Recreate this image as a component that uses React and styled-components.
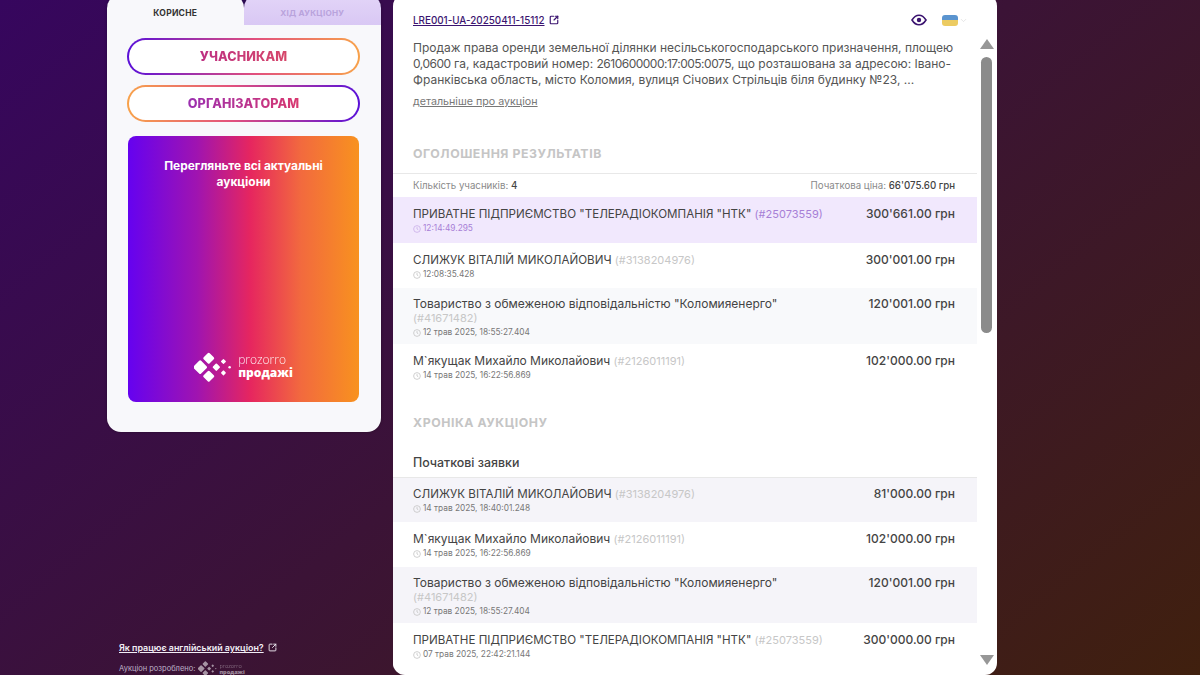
import React from "react";
import styled, { createGlobalStyle } from "styled-components";
import { ChevronDown, SquareArrowOutUpRight } from "lucide-react";

const Global = createGlobalStyle`
  html, body { margin: 0; padding: 0; height: 100%; }
  body { font-family: Inter, "Noto Sans", sans-serif; overflow: hidden; }
  * { box-sizing: border-box; }
`;

const Page = styled.div`
  width: 1200px;
  height: 675px;
  overflow: hidden;
  display: flex;
  gap: 12px;
  padding-left: 107px;
  background: linear-gradient(141deg, #36065e 0%, #40200e 100%);
`;

const Side = styled.aside`
  width: 274px;
  height: 675px;
  display: flex;
  flex-direction: column;
`;

const Card = styled.div`
  margin-top: -6px;
  height: 438px;
  background: #f8f8fb;
  border-radius: 14px;
  display: flex;
  flex-direction: column;
  overflow: hidden;
  box-shadow: 0 0 3px rgba(0, 0, 0, 0.3);
`;

const Tabs = styled.div`
  display: flex;
  height: 31px;
  flex-shrink: 0;
  background: #2d0c52;
`;

const Tab = styled.div`
  height: 31px;
  padding-top: 6px;
  display: flex;
  align-items: center;
  justify-content: center;
  font-size: ${p => (p.$active ? "8.5px" : "8.2px")};
  font-weight: 700;
  letter-spacing: 0.25px;
  text-transform: uppercase;
  border-radius: 14px 14px 0 0;
  width: ${p => (p.$active ? "136.5px" : "137.5px")};
  background: ${p => (p.$active ? "#f8f8fb" : "linear-gradient(#e3d5f8, #d9c8f4)")};
  color: ${p => (p.$active ? "#333" : "#b9a3dc")};
`;

const CardBody = styled.div`
  padding: 13px 21px 0 20px;
  display: flex;
  flex-direction: column;
  gap: 10px;
`;

const GradientButton = styled.div`
  height: 37px;
  border-radius: 19px;
  border: 2px solid transparent;
  background:
    linear-gradient(#fff, #fff) padding-box,
    linear-gradient(${p => (p.$flip ? "270deg" : "90deg")}, #5a10d8, #e2507d 55%, #f8a24a) border-box;
  display: flex;
  align-items: center;
  justify-content: center;
`;

const GradientLabel = styled.span`
  font-size: 12.6px;
  font-weight: 800;
  letter-spacing: 0.1px;
  background: linear-gradient(90deg, ${p => (p.$flip ? "#9b2fb0, #d8386f" : "#bd2f82, #d6476a")});
  -webkit-background-clip: text;
  background-clip: text;
  color: transparent;
`;

const Banner = styled.div`
  margin: 4px 1px 0;
  height: 266px;
  border-radius: 8px;
  background: linear-gradient(90deg, #6502f0 0%, #a014b0 30%, #e6265f 53%, #f26a3e 75%, #f8921f 100%);
  display: flex;
  flex-direction: column;
  align-items: center;
  justify-content: space-between;
  padding: 22px 30px 20px;
`;

const BannerText = styled.div`
  color: #fff;
  font-size: 11.9px;
  line-height: 16px;
  font-weight: 700;
  text-align: center;
`;

const LogoRow = styled.div`
  display: flex;
  align-items: center;
  gap: ${p => (p.$small ? "2px" : "6px")};
`;

const LogoWords = styled.div`
  display: flex;
  flex-direction: column;
  color: ${p => (p.$small ? "rgba(255,255,255,0.5)" : "#fff")};
  font-size: ${p => (p.$small ? "5.6px" : "12px")};
  line-height: ${p => (p.$small ? "6px" : "12.5px")};
  font-family: "Open Sans", sans-serif;
`;

const LogoThin = styled.span`
  font-weight: 300;
  opacity: 0.9;
`;

const LogoBold = styled.span`
  font-weight: 800;
`;

const SideFooter = styled.div`
  margin-top: auto;
  padding: 0 0 0 12px;
  height: 33px;
  display: flex;
  flex-direction: column;
  color: #fff;
`;

const HowLink = styled.a`
  display: flex;
  align-items: center;
  gap: 4px;
  font-size: 8.9px;
  line-height: 11px;
  font-weight: 600;
  text-decoration: underline;
  color: #f2eef6;
`;

const MadeBy = styled.div`
  margin-top: 8px;
  display: flex;
  align-items: center;
  gap: 3px;
  font-size: 7.5px;
  line-height: 12px;
  color: #bfb2c9;
`;

const Main = styled.main`
  width: 604px;
  height: 681px;
  margin-top: -6px;
  background: #fff;
  border-radius: 12px;
  display: flex;
  overflow: hidden;
`;

const Content = styled.div`
  width: 584px;
  flex-shrink: 0;
  padding-top: 6px;
`;

const Head = styled.div`
  padding: 0 23px 0 20px;
`;

const TopRow = styled.div`
  height: 40px;
  display: flex;
  align-items: center;
  justify-content: space-between;
`;

const AuctionId = styled.a`
  display: flex;
  align-items: center;
  gap: 4px;
  color: #3b1470;
  font-size: 9.85px;
  font-weight: 500;
  text-decoration: underline;
`;

const TopIcons = styled.div`
  display: flex;
  align-items: center;
  gap: 15px;
  margin-right: -14px;
`;

const FlagWrap = styled.div`
  display: flex;
  align-items: center;
  gap: 1px;
`;

const Flag = styled.div`
  width: 16px;
  height: 11px;
  border-radius: 3px;
  background: linear-gradient(#5a94cf 50%, #eccb62 50%);
`;

const Description = styled.p`
  margin: 0;
  width: 560px;
  font-size: 12px;
  line-height: 16px;
  color: #555;
`;

const Digits = styled.span`
  letter-spacing: -0.5px;
`;

const MoreLink = styled.a`
  display: block;
  margin-top: 7px;
  font-size: 10.7px;
  line-height: 14px;
  color: #777;
  text-decoration: underline;
`;

const SectionTitle = styled.h2`
  margin: 0;
  padding: 0 20px;
  height: ${p => p.$h}px;
  display: flex;
  align-items: flex-end;
  font-size: 12.3px;
  line-height: 14px;
  font-weight: 700;
  letter-spacing: 0.55px;
  text-transform: uppercase;
  color: #c5c5c5;
`;

const Stats = styled.div`
  margin-top: 12px;
  height: 24px;
  padding: 0 22px 0 20px;
  border-top: 1px solid #e8e8e8;
  display: flex;
  align-items: center;
  justify-content: space-between;
  font-size: 9.7px;
  color: #8a8a8a;
`;

const StatValue = styled.b`
  font-weight: 500;
  color: #444;
`;

const Row = styled.div`
  display: flex;
  justify-content: space-between;
  min-height: ${p => p.$h}px;
  padding: ${p => p.$pad}px 22px 0 20px;
  background: ${p => p.$bg || "#fff"};
`;

const RowMain = styled.div`
  width: 412px;
  min-width: 0;
`;

const Name = styled.div`
  font-size: ${p => (p.$caps ? "11.6px" : "12px")};
  line-height: 14px;
  color: #444;
`;

const Code = styled.span`
  font-size: 11px;
  color: ${p => (p.$on ? "#a77fd6" : "#c7c7c7")};
`;

const Time = styled.div`
  margin-top: 1px;
  display: flex;
  align-items: center;
  gap: 2px;
  font-size: 8.3px;
  line-height: 13px;
  color: ${p => (p.$on ? "#a77fd6" : "#777")};
`;

const Clock = styled.svg`
  width: 8px;
  height: 8px;
  flex-shrink: 0;
  fill: none;
  stroke: ${p => (p.$on ? "#c9aee8" : "#c4c4c4")};
`;

const Price = styled.div`
  font-size: 12px;
  line-height: 14px;
  font-weight: 500;
  color: #444;
  white-space: nowrap;
`;

const SubTitle = styled.h3`
  margin: 0;
  padding: 0 20px 7px;
  height: 48px;
  display: flex;
  align-items: flex-end;
  font-size: 12.4px;
  font-weight: 500;
  color: #444;
  border-bottom: 1px solid #e8e8e8;
`;

const ScrollBar = styled.div`
  width: 20px;
  padding: 45px 5px 10px 4px;
  display: flex;
  flex-direction: column;
  align-items: center;
`;

const Arrow = styled.div`
  width: 0;
  height: 0;
  border-left: 7px solid transparent;
  border-right: 7px solid transparent;
  ${p => (p.$down ? "border-top: 10px solid #979797;" : "border-bottom: 10px solid #979797;")}
`;

const Thumb = styled.div`
  width: 11px;
  height: 276px;
  margin-top: 8px;
  border-radius: 6px;
  background: #8b8b8b;
`;

const Spacer = styled.div`
  flex: 1;
`;

const Logo = ({ size, opacity = 1 }) => (
  <svg width={size} height={size * 0.8} viewBox="0 0 40 32" fill="#fff" opacity={opacity}>
    <rect x="1" y="10.5" width="11" height="11" rx="1.5" transform="rotate(45 6.5 16)" />
    <rect x="11" y="2" width="9" height="9" rx="1.5" transform="rotate(45 15.5 6.5)" />
    <rect x="11" y="21" width="9" height="9" rx="1.5" transform="rotate(45 15.5 25.5)" />
    <rect x="20.5" y="13" width="6" height="6" rx="1" transform="rotate(45 23.5 16)" />
    <rect x="29" y="8" width="4" height="4" rx="0.6" transform="rotate(45 31 10)" />
    <rect x="29" y="20" width="4" height="4" rx="0.6" transform="rotate(45 31 22)" />
    <circle cx="37.5" cy="16" r="1.3" />
  </svg>
);

const EyeIcon = () => (
  <svg width="16" height="12" viewBox="0 0 16 12" fill="none">
    <path d="M1 6C3 2.8 5.3 1.2 8 1.2S13 2.8 15 6c-2 3.2-4.3 4.800-7 4.800S3 9.200 1 6Z" stroke="#3b1470" strokeWidth="1.6" />
    <circle cx="8" cy="6" r="2.2" fill="#3b1470" />
  </svg>
);

const ClockIcon = ({ on }) => (
  <Clock $on={on} viewBox="0 0 10 10">
    <circle cx="5" cy="5" r="4.2" />
    <path d="M5 2.6V5l1.6 1" />
  </Clock>
);

const Entry = ({ name, code, time, price, bg, on, h, caps, pad = 10 }) => (
  <Row $bg={bg} $h={h} $pad={pad}>
    <RowMain>
      <Name $caps={caps}>
        {name} <Code $on={on}>(#{code})</Code>
      </Name>
      <Time $on={on}>
        <ClockIcon on={on} />
        {time}
      </Time>
    </RowMain>
    <Price>{price} грн</Price>
  </Row>
);

const NTK = 'ПРИВАТНЕ ПІДПРИЄМСТВО "ТЕЛЕРАДІОКОМПАНІЯ "НТК"';
const KOL = 'Товариство з обмеженою відповідальністю "Коломияенерго"';
const SL = "СЛИЖУК ВІТАЛІЙ МИКОЛАЙОВИЧ";
const MY = "М`якущак Михайло Миколайович";

export default function App() {
  return (
    <>
      <Global />
      <Page>
        <Side>
          <Card>
            <Tabs>
              <Tab $active>Корисне</Tab>
              <Tab>Хід аукціону</Tab>
            </Tabs>
            <CardBody>
              <GradientButton>
                <GradientLabel>УЧАСНИКАМ</GradientLabel>
              </GradientButton>
              <GradientButton $flip>
                <GradientLabel $flip>ОРГАНІЗАТОРАМ</GradientLabel>
              </GradientButton>
              <Banner>
                <BannerText>Перегляньте всі актуальні аукціони</BannerText>
                <LogoRow>
                  <Logo size={38} />
                  <LogoWords>
                    <LogoThin>prozorro</LogoThin>
                    <LogoBold>продажі</LogoBold>
                  </LogoWords>
                </LogoRow>
              </Banner>
            </CardBody>
          </Card>
          <SideFooter>
            <HowLink>
              Як працює англійський аукціон?
              <SquareArrowOutUpRight size={9} strokeWidth={2.4} />
            </HowLink>
            <MadeBy>
              Аукціон розроблено:
              <LogoRow $small>
                <Logo size={19} opacity={0.55} />
                <LogoWords $small>
                  <LogoThin>prozorro</LogoThin>
                  <LogoBold>продажі</LogoBold>
                </LogoWords>
              </LogoRow>
            </MadeBy>
          </SideFooter>
        </Side>
        <Main>
          <Content>
            <Head>
              <TopRow>
                <AuctionId>
                  LRE001-UA-20250411-15112
                  <SquareArrowOutUpRight size={10} strokeWidth={2.8} />
                </AuctionId>
                <TopIcons>
                  <EyeIcon />
                  <FlagWrap>
                    <Flag />
                    <ChevronDown size={9} color="#ddd" />
                  </FlagWrap>
                </TopIcons>
              </TopRow>
              <Description>
                Продаж права оренди земельної ділянки несільськогосподарського призначення, площею
                <br />
                <Digits>0,0600</Digits> га, кадастровий номер: <Digits>2610600000:17:005:0075</Digits>, що розташована за адресою: Івано-
                <br />
                Франківська область, місто Коломия, вулиця Січових Стрільців біля будинку №23, ...
              </Description>
              <MoreLink>детальніше про аукціон</MoreLink>
            </Head>
            <SectionTitle $h={52}>Оголошення результатів</SectionTitle>
            <Stats>
              <span>
                Кількість учасників: <StatValue>4</StatValue>
              </span>
              <span>
                Початкова ціна: <StatValue>66'075.60 грн</StatValue>
              </span>
            </Stats>
            <Entry name={NTK} caps code="25073559" time="12:14:49.295" price="300'661.00" bg="#f1e8fd" on h={46} />
            <Entry name={SL} caps code="3138204976" time="12:08:35.428" price="300'001.00" h={45} />
            <Entry name={KOL} code="41671482" time="12 трав 2025, 18:55:27.404" price="120'001.00" bg="#f8f9fb" h={56} pad={9} />
            <Entry name={MY} code="2126011191" time="14 трав 2025, 16:22:56.869" price="102'000.00" h={45} />
            <SectionTitle $h={41}>Хроніка аукціону</SectionTitle>
            <SubTitle>Початкові заявки</SubTitle>
            <Entry name={SL} caps code="3138204976" time="14 трав 2025, 18:40:01.248" price="81'000.00" bg="#f5f4f9" h={44} pad={9} />
            <Entry name={MY} code="2126011191" time="14 трав 2025, 16:22:56.869" price="102'000.00" h={45} />
            <Entry name={KOL} code="41671482" time="12 трав 2025, 18:55:27.404" price="120'001.00" bg="#f5f4f9" h={56} pad={9} />
            <Entry name={NTK} caps code="25073559" time="07 трав 2025, 22:42:21.144" price="300'000.00" h={45} />
          </Content>
          <ScrollBar>
            <Arrow />
            <Thumb />
            <Spacer />
            <Arrow $down />
          </ScrollBar>
        </Main>
      </Page>
    </>
  );
}
